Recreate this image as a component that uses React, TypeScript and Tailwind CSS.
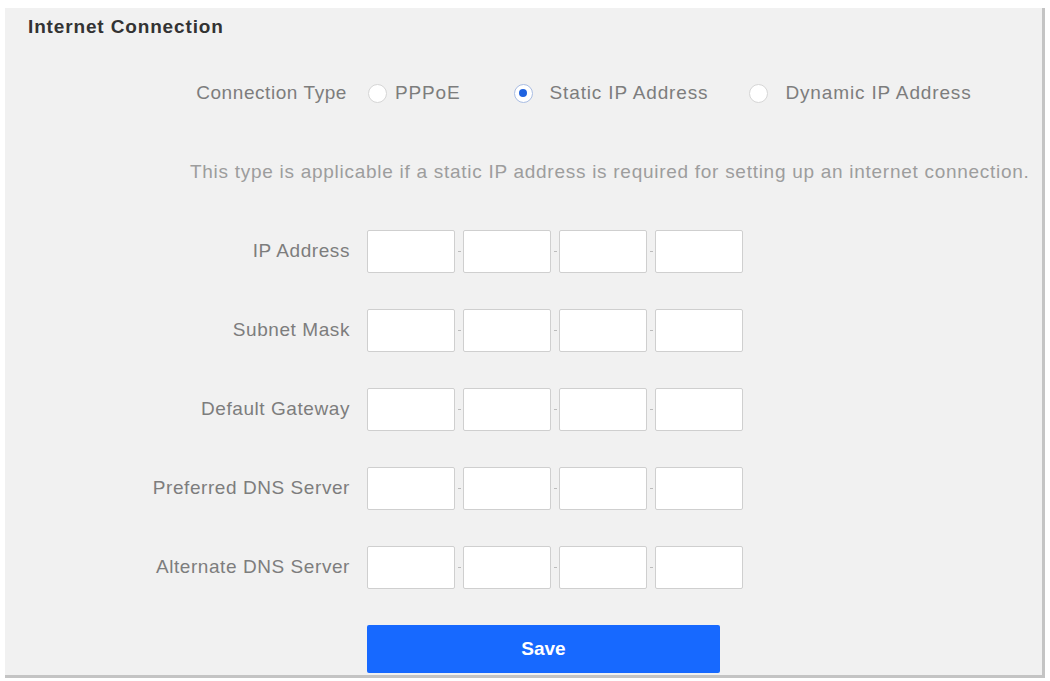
const FIELDS = [
  "IP Address",
  "Subnet Mask",
  "Default Gateway",
  "Preferred DNS Server",
  "Alternate DNS Server",
];

function Radio({
  checked,
  label,
  gap = "ml-[17px]",
  className,
}: {
  checked?: boolean;
  label: string;
  gap?: string;
  className?: string;
}) {
  return (
    <label className={"flex items-center " + (className ?? "")}>
      <span
        className={
          "flex h-[19px] w-[19px] items-center justify-center rounded-full border bg-white " +
          (checked ? "border-[#a9bde3]" : "border-[#d6d6d6]")
        }
      >
        {checked ? <span className="h-[8px] w-[8px] rounded-full bg-[#1f63e0]" /> : null}
      </span>
      <span className={gap + " text-[19px] tracking-[0.045em] text-[#7d7d7d]"}>{label}</span>
    </label>
  );
}

function IpInput() {
  return (
    <div className="flex items-center">
      {[0, 1, 2, 3].map((i) => (
        <div key={i} className="flex items-center">
          {i > 0 ? (
            <span className="flex w-[8px] justify-center">
              <span className="h-px w-[3px] bg-[#bcbcbc]" />
            </span>
          ) : null}
          <div className="h-[43px] w-[88px] rounded-[2px] border border-[#cfcfcf] bg-white" />
        </div>
      ))}
    </div>
  );
}

export default function App() {
  return (
    <div className="h-[681px] w-[1050px] overflow-hidden bg-white pl-[5px] pt-[8px] font-['Liberation_Sans',Arial,sans-serif]">
      <section className="flex h-[670px] w-[1040px] flex-col border-b-[3px] border-r-[3px] border-[#c4c4c4] bg-[#f1f1f1]">
        <h2 className="ml-[23px] mt-[8px] text-[19px] font-bold leading-[22px] tracking-[0.045em] text-[#333]">
          Internet Connection
        </h2>

        <div className="mt-[44px] flex h-[22px] items-center">
          <span className="w-[345px] pr-[3px] text-right text-[19px] tracking-[0.03em] text-[#7d7d7d]">
            Connection Type
          </span>
          <div className="ml-[18px] flex items-center">
            <Radio label="PPPoE" gap="ml-[8px]" />
            <Radio label="Static IP Address" checked className="ml-[53px]" />
            <Radio label="Dynamic IP Address" className="ml-[41px]" />
          </div>
        </div>

        <p className="ml-[185px] mt-[57px] whitespace-nowrap text-[19px] leading-[22px] tracking-[0.038em] text-[#9d9d9d]">
          This type is applicable if a static IP address is required for setting up an internet connection.
        </p>

        <div className="mt-[47px] flex flex-col gap-[36px]">
          {FIELDS.map((f) => (
            <div key={f} className="flex items-center">
              <span className="w-[345px] text-right text-[19px] tracking-[0.03em] text-[#7d7d7d]">{f}</span>
              <div className="ml-[17px]">
                <IpInput />
              </div>
            </div>
          ))}
        </div>

        <div className="ml-[362px] mt-[36px]">
          <button className="h-[48px] w-[353px] rounded-[2px] bg-[#1769ff] text-[19px] font-bold text-white">
            Save
          </button>
        </div>
      </section>
    </div>
  );
}
